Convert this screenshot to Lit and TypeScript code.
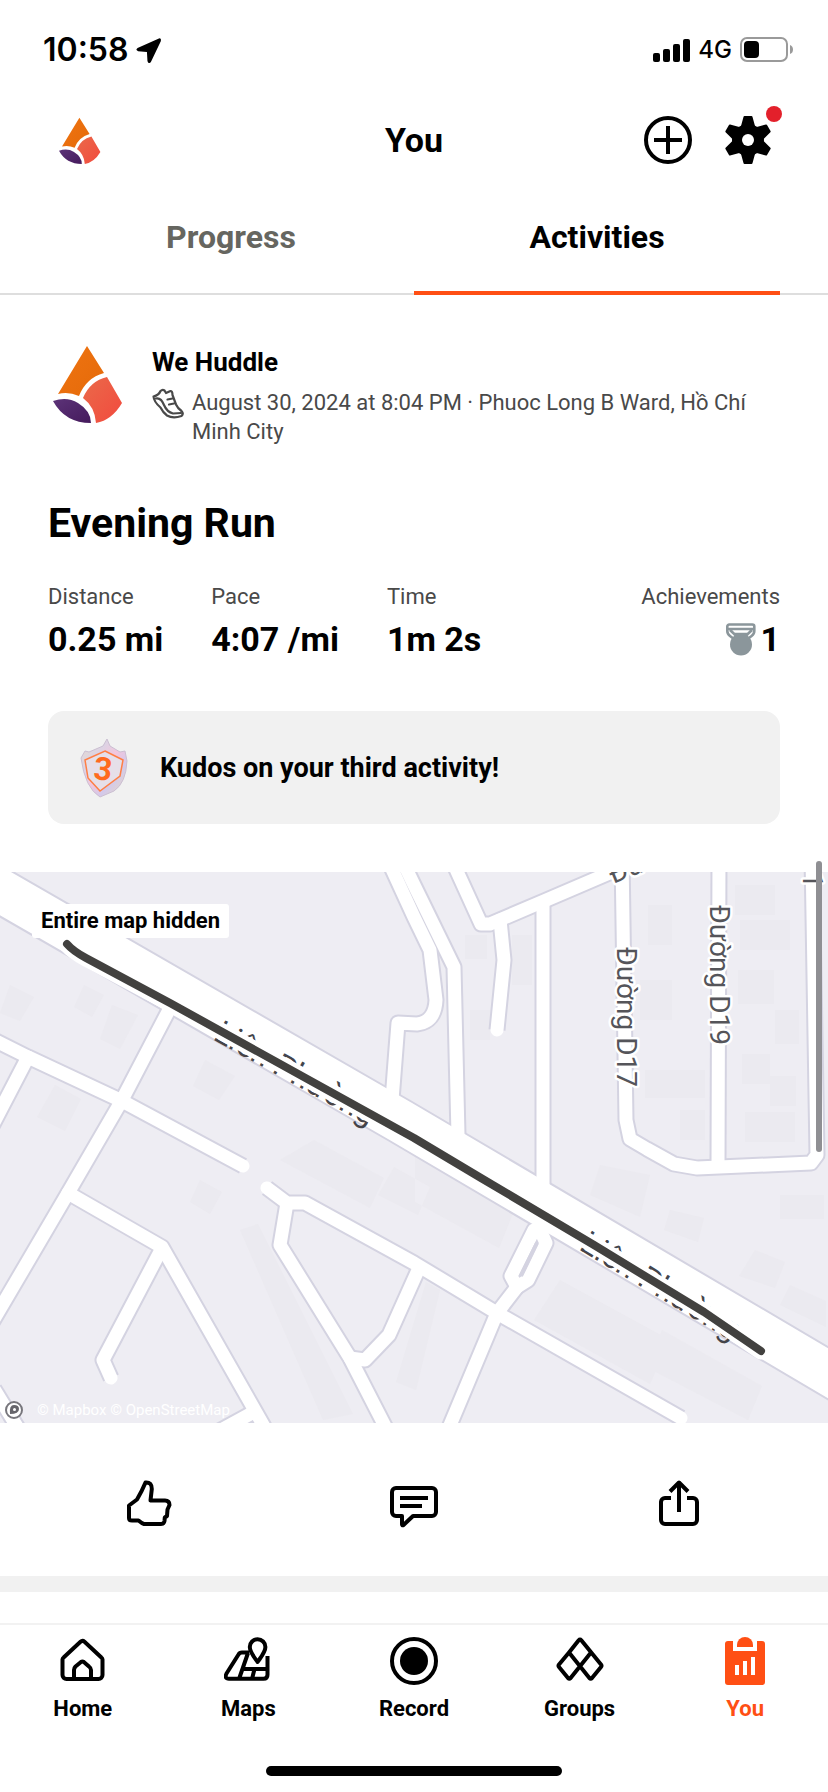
import { LitElement, html, svg, css } from "lit";
import { customElement, property, state } from "lit/decorators.js";
import { classMap } from "lit/directives/class-map.js";

@customElement("brand-logo")
class BrandLogo extends LitElement {
  static styles = css`
    :host { display: block; }
    svg { display: block; width: 100%; height: 100%; }
  `;
  render() {
    return html`<svg viewBox="0 0 80 80" role="img" aria-label="We Huddle">
      <defs>
        <linearGradient id="o" x1="0" y1="0" x2="1" y2="1"><stop offset="0" stop-color="#ef7411"/><stop offset="1" stop-color="#e56a0a"/></linearGradient>
        <linearGradient id="r" x1="0" y1="0" x2="1" y2="1"><stop offset="0" stop-color="#ea6a4a"/><stop offset="1" stop-color="#f24a3e"/></linearGradient>
        <linearGradient id="p" x1="0" y1="0" x2="1" y2="1"><stop offset="0" stop-color="#5c3378"/><stop offset="1" stop-color="#451a5c"/></linearGradient>
      </defs>
      <path fill="url(#o)" d="M39 3 56 30Q38 35 31 53 20 48 10 51Z"/>
      <path fill="url(#r)" d="M59 34 74 60Q64 77 48 80 47 64 35 55 42 38 59 34Z"/>
      <path fill="url(#p)" d="M5 58Q19 53 30 60 43 68 43 80 17 80 5 58Z"/>
    </svg>`;
  }
}

const ROADS = [
  "M170 1008 122 1100 68 1193-10 1326",
  "M-10 1038 28 1057 122 1101 243 1166",
  "M28 1057-12 1134",
  "M68 1193 162 1247 262 1423 276 1448",
  "M162 1248 103 1360 111 1378",
  "M-6 1389 24 1438",
  "M254 1412 210 1436",
  "M267 1188 287 1203H305L414 1263 497 1313 681 1418",
  "M287 1203 280 1245 350 1358 388 1432",
  "M350 1358 365 1360 389 1335 419 1268",
  "M448 1430 497 1313 517 1287",
  "M517 1287 511 1276 534 1230H540L546 1243 528 1280Z",
  "M543 905V1190",
  "M450 856 481 924H490L544 901 621 868 660 850",
  "M500 920 504 960 497 1030",
  "M403 862 414 885 454 967 458 1135",
  "M386 856 414 917 430 950 436 1000Q435 1022 417 1024L398 1023 392 1100",
  "M622 856 626 1120 630 1139 647 1149 674 1164 697 1168 811 1163 817 1155 812 856",
  "M719 856 718 1165",
];
const HIGHWAY = "M-20 879 400 1121 848 1385";
const RUN = "M67 944Q73 951 86 958L170 1003 414 1138 481 1178 594 1245 704 1312 761 1351";

const BLOCKS = [
  "M648 905h24v40h-24zM640 980h32v40h-32zM645 1070h60v28h-60zM680 1110h25v30h-25z",
  "M735 885h40v30h-40zM740 920h50v30h-50zM738 970h36v34h-36zM742 1054h28v30h-28zM775 1010h24v34h-24zM770 1076h26v30h-26zM745 1112h50v30h-50z",
  "M465 935h22v24h-22zM512 935h20v50h-20zM470 1010h20v30h-20z",
  "M280 1160l90 48 14-30-70-38zM378 1195l40 20 12-28-36-20z",
  "M240 1230l18-6 95 190-30 6z",
  "M440 1290l-24 100-20-8 30-100z",
  "M415 1150l100 58-16 40-84-46z",
  "M560 1280l110 60-20 44-116-64z",
  "M662 1330l100 56-14 34-100-52z",
  "M600 1165l50 10-10 42-50-22zM670 1210l34 8-6 24-34-12zM780 1195h44v24h-44z",
  "M55 1085l26 14-16 32-28-14zM200 1180l22 12-12 22-20-12zM205 1060l30 16-16 24-26-14z",
  "M10 985l24 12-14 24-20-8zM84 985l20 10-12 22-18-10zM112 1005l26 10-18 34-20-10z",
  "M755 1250l30 12-10 26-36-12zM790 1285l36 16v26l-46-22z",
];

@customElement("route-map")
class RouteMap extends LitElement {
  static styles = css`
    :host { display: block; position: relative; font-family: Roboto, "Noto Sans", sans-serif; }
    svg { display: block; width: 100%; overflow: hidden; }
    .edge { fill: none; stroke: #d4d3e1; stroke-linejoin: round; }
    .road { fill: none; stroke: #fff; stroke-linejoin: round; stroke-linecap: round; }
    .w13 { stroke-width: 13; }
    .e13 { stroke-width: 17; }
    .w44 { stroke-width: 43; }
    .e44 { stroke-width: 47; }
    .run-halo { fill: none; stroke: #fff; stroke-width: 17; stroke-linecap: round; }
    .run { fill: none; stroke: #42413f; stroke-width: 8; stroke-linecap: round; stroke-linejoin: round; }
    .street { font-size: 28px; fill: #55555a; stroke: #fff; stroke-width: 5; paint-order: stroke; stroke-linejoin: round; }
    .avenue { font-size: 32px; fill: #44444a; }
    .credit { font-size: 15px; fill: #fff; }
    .tag { position: absolute; left: 32px; top: 32px; padding: 0 9px; background: #fff; border-radius: 3px; font-size: 22px; font-weight: 700; line-height: 34px; color: #000; }
  `;
  render() {
    return html`
      <svg viewBox="0 872 828 551" role="img" aria-label="Route map">
        <rect x="0" y="872" width="828" height="551" fill="#eeedf3"/>
        <path d=${BLOCKS.join("")} fill="#e9e8ee" opacity=".7"/>
        ${ROADS.map((d) => svg`<path class="edge e13" d=${d}/>`)}
        <path class="edge e44" d=${HIGHWAY}/>
        ${ROADS.map((d) => svg`<path class="road w13" d=${d}/>`)}
        <path class="road w44" d=${HIGHWAY}/>
        <path d="M537 1243 521 1276" stroke="#d4d3e1" stroke-width="4"/>
        <text class="street" transform="translate(617 947) rotate(90)">Đường D17</text>
        <text class="street" transform="translate(710 905) rotate(90)">Đường D19</text>
        <text class="street" transform="translate(613 884) rotate(-22)">Đư</text>
        <text class="street" text-anchor="end" transform="translate(803 888) rotate(90)">1</text>
        <text class="avenue" transform="translate(212 1039) rotate(29)">Liên Phường</text>
        <text class="avenue" transform="translate(578 1249) rotate(31)">Liên Phường</text>
        <path class="run-halo" d=${RUN}/>
        <path class="run" d=${RUN}/>
        <circle cx="14" cy="1410" r="8" fill="#fff" stroke="#77767c" stroke-width="2"/>
        <path d="M10 1414q-1-9 4-9 5 0 5 4 0 5-9 5z" fill="#66656b"/>
        <circle cx="14.500" cy="1409.500" r="1.500" fill="#fff"/>
        <text class="credit" x="37" y="1415">© Mapbox © OpenStreetMap</text>
      </svg>
      <span class="tag">Entire map hidden</span>
    `;
  }
}

const line = (body: unknown) => html`<svg class="icon" viewBox="0 0 48 48" fill="none" stroke="currentColor" stroke-width="4" stroke-linejoin="round" aria-hidden="true">${body}</svg>`;

const icons = {
  add: line(svg`<circle cx="24" cy="24" r="22"/><path d="M24 10v28M10 24h28"/>`),
  gear: html`<svg class="icon" viewBox="0 0 48 48" aria-hidden="true">
    ${[0, 60, 120, 180, 240, 300].map((a) => svg`<path d="M20.500 1h7l3 11h-13z" stroke="#000" stroke-width="2" stroke-linejoin="round" transform="rotate(${a} 24 24)"/>`)}
    <circle cx="24" cy="24" r="16"/><circle cx="24" cy="24" r="6" fill="#fff"/></svg>`,
  kudos: line(svg`<path d="M20.500 2.500Q27 2 26.800 9L25.500 20.500H40Q44.500 20.500 44.500 25L42.500 29.500 42 36 39.800 37.500 39.500 41Q39 44 36 44H19Q17 43.500 13.500 40.500H7Q4 40.500 4 38V25.500L12 19.500Q17 11 20.500 2.500Z"/>`),
  comment: line(svg`<path d="M6 8h36a4 4 0 0 1 4 4v20a4 4 0 0 1-4 4H23l-9.500 9q-1.500 1-1.500-1v-8H6a4 4 0 0 1-4-4V12a4 4 0 0 1 4-4zM10 18h28M10 26h22"/>`),
  share: line(svg`<path d="M16 18h-6a4 4 0 0 0-4 4v18a4 4 0 0 0 4 4h28a4 4 0 0 0 4-4V22a4 4 0 0 0-4-4h-6M24 32V3M15 11.500l9-9 9 9"/>`),
  home: line(svg`<path d="M4.600 20.500 21.500 4.800a3 3 0 0 1 4 0L42.400 20.500a3 3 0 0 1 1.100 2V38a4 4 0 0 1-4 4H7.500a4 4 0 0 1-4-4V22.500a3 3 0 0 1 1.100-2zM15 42v-9q0-2 1.500-3.500l5.500-4.500q1.400-1 2.800 0l5.200 4.500q2 1.500 2 3.500v9"/>`),
  maps: line(svg`<path d="M25 15.500h-7q-2.500 0-3.500 2L2.500 36.500Q0 41.700 5 41.700H39.500q4 0 4-4V19M24 16 15 42M19 32h24M30.500 32 28 42"/><path d="M33.600 25C30 20 25.800 15 25.800 10a7.800 7.800 0 0 1 15.600 0C41.400 15 37 20 33.600 25z" fill="#fff"/>`),
  record: line(svg`<circle cx="24" cy="24" r="22"/><circle cx="24" cy="24" r="14" fill="currentColor" stroke="none"/>`),
  groups: line(svg`<path stroke-linecap="round" d="M13 15.500 22.700 3.200q1.300-1.500 2.600 0L45 27.500q1 1.300 0 2.500l-9 11q-1.300 1.300-2.600 0L13 15.500 3 27.500q-1 1.300 0 2.500l9 11q1.300 1.300 2.600 0L35 15.500"/>`),
  you: html`<svg class="icon" viewBox="0 0 48 48" fill="currentColor" aria-hidden="true">
    <path d="M7 4h5v10h24V4h5a3 3 0 0 1 3 3v38a3 3 0 0 1-3 3H7a3 3 0 0 1-3-3V7a3 3 0 0 1 3-3z"/>
    <path d="M16 10V8a8 8 0 0 1 16 0v2z"/><path fill="#fff" d="M14 28h4v10h-4zM22 24h4v14h-4zM30 20h4v18h-4z"/></svg>`,
};

@customElement("app-root")
class AppRoot extends LitElement {
  @property() author = "We Huddle";
  @state() private tab = "Activities";

  static styles = css`
    :host { display: flex; flex-direction: column; min-height: 100vh; position: relative; background: #fff; color: #000; font-family: Roboto, "Noto Sans", sans-serif; font-size: 22px; --accent: #ff4f14; --gutter: 48px; }
    * { box-sizing: border-box; }
    button { appearance: none; border: 0; padding: 0; margin: 0; background: none; color: inherit; font: inherit; cursor: pointer; }
    a { color: inherit; text-decoration: none; }
    h1, h2, h3, p, dl, dd { margin: 0; }
    .icon { display: block; width: 48px; height: 48px; }

    .status { display: flex; align-items: center; padding: 30px 34px 46px 43px; line-height: 40px; font-family: Inter, sans-serif; }
    .clock { font-size: 32px; font-weight: 600; margin-right: 8px; }
    .signals { display: flex; align-items: center; gap: 8px; margin-left: auto; font-size: 24px; font-weight: 500; }
    .signals svg, .status > svg { display: block; }

    .top { display: grid; grid-template-columns: 1fr auto 1fr; align-items: center; padding: 0 56px 16px; }
    .top h1 { font-size: 34px; line-height: 48px; }
    .top brand-logo { width: 48px; height: 48px; }
    .tools { display: flex; gap: 32px; justify-content: flex-end; }
    .tools button { position: relative; }
    .dot { position: absolute; top: -10px; right: -10px; width: 16px; height: 16px; border-radius: 50%; background: #e3202b; }

    .tabs { display: grid; grid-template-columns: 1fr 1fr; padding: 0 var(--gutter); box-shadow: inset 0 -2px #dedede; }
    .tabs button { padding: 37px 0 38px; font-size: 32px; line-height: 40px; font-weight: 700; color: #666660; }
    .tabs .on { color: #000; box-shadow: inset 0 -4px var(--accent); }

    .inset { padding: 48px var(--gutter); }
    .author { display: flex; gap: 24px; }
    .author brand-logo { flex: none; width: 80px; height: 80px; }
    .who { padding-top: 3px; }
    .who h2 { font-size: 26px; line-height: 32px; }
    .meta { display: flex; gap: 8px; margin-top: 10px; line-height: 29px; color: #494949; }
    .meta svg { flex: none; width: 32px; height: 32px; }
    .title { margin-top: 53px; font-size: 41px; line-height: 48px; }
    .stats { display: flex; gap: 48px; margin-top: 36px; }
    .stats dt { line-height: 28px; color: #494949; }
    .stats dd { margin-top: 10px; font-size: 34px; line-height: 36px; font-weight: 700; }
    .stats .last { margin-left: auto; text-align: right; }
    .last dd { display: flex; justify-content: flex-end; align-items: center; gap: 4px; }
    .banner { display: flex; align-items: center; gap: 32px; margin-top: 54px; min-height: 113px; padding: 24px 32px; border-radius: 16px; background: #f1f1f1; font-size: 27px; font-weight: 700; }
    .badge { flex: none; width: 48px; height: 60px; }
    .badge text { font-size: 32px; font-weight: 700; fill: #ff6a1f; }

    .actions { display: grid; grid-template-columns: repeat(3, 1fr); justify-items: center; padding: 57px 16px 48px; border-bottom: 16px solid #f1f1f1; margin-bottom: 31px; }

    .nav { display: grid; grid-template-columns: repeat(5, 1fr); margin-top: auto; border-top: 2px solid #f2f2f2; padding: 12px 0 43px; }
    .nav a { display: flex; flex-direction: column; align-items: center; gap: 10px; line-height: 28px; font-weight: 700; }
    .nav .current { color: var(--accent); }
    .grabber { align-self: center; width: 296px; height: 10px; margin-bottom: 16px; border-radius: 5px; background: #000; }
    .scroller { position: absolute; top: 861px; right: 6px; width: 6px; height: 291px; border-radius: 3px; background: #8f8f93; }
  `;

  private tabButton(name: string) {
    const on = this.tab === name;
    return html`<button role="tab" aria-selected=${on} class=${classMap({ on })} @click=${() => (this.tab = name)}>${name}</button>`;
  }

  private navLink(name: string, icon: unknown, current = false) {
    return html`<a href="#${name.toLowerCase()}" class=${classMap({ current })}>${icon}<span>${name}</span></a>`;
  }

  render() {
    return html`
      <div class="status">
        <span class="clock">10:58</span>
        <svg width="25" height="25" viewBox="0 0 24 24"><path d="M22 .400 1.500 9.500Q-1 11.500 2 12.600L10.500 13.500 11 22Q12 25.500 14.300 23L23.800 3Q24.500-.2 22 .400Z"/></svg>
        <div class="signals">
          <svg width="37" height="23" viewBox="0 0 37 23"><rect y="14" width="7" height="9" rx="2"/><rect x="10" y="10" width="7" height="13" rx="2"/><rect x="20" y="5" width="7" height="18" rx="2"/><rect x="30" width="7" height="23" rx="2"/></svg>
          <span>4G</span>
          <svg width="54" height="26" viewBox="0 0 54 26"><rect x="1" y="1" width="46" height="23" rx="6" fill="none" stroke="#9a9a9a" stroke-width="2"/><rect x="4" y="4" width="15" height="17" rx="4"/><path d="M50 8q3 1 3 4.500T50 17z" fill="#9a9a9a"/></svg>
        </div>
      </div>

      <header class="top">
        <brand-logo></brand-logo>
        <h1>You</h1>
        <div class="tools">
          <button aria-label="Add">${icons.add}</button>
          <button aria-label="Settings">${icons.gear}<span class="dot"></span></button>
        </div>
      </header>

      <div class="tabs" role="tablist">${this.tabButton("Progress")}${this.tabButton("Activities")}</div>

      <article>
        <div class="inset">
          <div class="author">
            <brand-logo></brand-logo>
            <div class="who">
              <h2>${this.author}</h2>
              <div class="meta">
                <svg viewBox="0 0 32 32" fill="none" stroke="currentColor" stroke-width="2.200" stroke-linejoin="round" stroke-linecap="round" aria-hidden="true">
                  <path d="M1.500 8.500Q7 7 8.500 3 10.500 1 12.500 2.500L14 5 18.500 3Q20.500 3 20.500 7L24 16.500Q25.500 20 29.500 23 32 25.500 29.500 28 21 31 15 27.500 11 24.500 8.500 19.500 2 14 1.500 8.500Z"/>
                  <path d="M3.500 10.500Q9 9 12 17 15 24 21 25.500L29 25M15.500 11.500l5-1M17 16.500l5-1"/>
                </svg>
                <p>August 30, 2024 at 8:04 PM · Phuoc Long B Ward, Hồ Chí Minh City</p>
              </div>
            </div>
          </div>

          <h3 class="title">Evening Run</h3>

          <dl class="stats">
            <div><dt>Distance</dt><dd>0.25 mi</dd></div>
            <div><dt>Pace</dt><dd>4:07 /mi</dd></div>
            <div><dt>Time</dt><dd>1m 2s</dd></div>
            <div class="last"><dt>Achievements</dt><dd>
              <svg width="30" height="33" viewBox="0 0 30 33" fill="none" stroke="#8b969b" stroke-width="2.600" aria-hidden="true">
                <path d="M8 16 4 13Q1.300 11 1.300 8V3.500a2 2 0 0 1 2-2h23a2 2 0 0 1 2 2V8q0 3-2.700 5l-4 3M2 6h26M4 7l8 7.500M26 7l-8 7.500M8 11h14"/>
                <circle cx="15" cy="21.500" r="11" fill="#8b969b" stroke="none"/></svg>1</dd></div>
          </dl>

          <div class="banner">
            <svg class="badge" viewBox="0 0 48 60" aria-hidden="true">
              <defs><linearGradient id="shield" x1="0" y1="0" x2="1" y2="1">
                <stop offset="0" stop-color="#e6dccb"/><stop offset=".3" stop-color="#dcd3e4"/><stop offset=".5" stop-color="#f2c6dd"/><stop offset=".7" stop-color="#d3c9ea"/><stop offset="1" stop-color="#eadcc0"/>
              </linearGradient></defs>
              <path d="M27 1 30 8 40 14 45 13 47 23Q46 45 34 53L20 59Q5 50 1 20L5 13 9 14 23 8Z" fill="url(#shield)" stroke="#cbbfd2"/>
              <path d="M25 13 43 22 40 38 20 53 8 40 5 22Z" fill="#e6dfe9" stroke="#ff7f45" stroke-width="1.500"/>
              <text x="23" y="42" text-anchor="middle" transform="rotate(6 23 32)">3</text>
            </svg>
            <p>Kudos on your third activity!</p>
          </div>
        </div>

        <route-map></route-map>

        <div class="actions">
          <button aria-label="Give kudos">${icons.kudos}</button>
          <button aria-label="Comment">${icons.comment}</button>
          <button aria-label="Share">${icons.share}</button>
        </div>
      </article>

      <nav class="nav">
        ${this.navLink("Home", icons.home)}
        ${this.navLink("Maps", icons.maps)}
        ${this.navLink("Record", icons.record)}
        ${this.navLink("Groups", icons.groups)}
        ${this.navLink("You", icons.you, true)}
      </nav>
      <div class="grabber"></div>
      <div class="scroller"></div>
    `;
  }
}
